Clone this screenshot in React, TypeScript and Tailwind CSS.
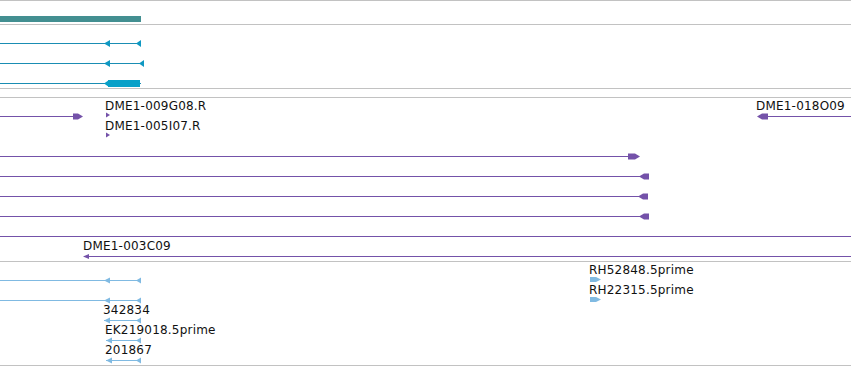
import type { ReactNode } from "react";

type Pt = { x: number; y: number };

const TX_LINE = "#1a8db3";
const TX_HEAD = "#0f98c2";
const TX_CDS = "#08a0c8";
const PURPLE = "#7452a9";
const SKY = "#80bae2";

// row line sits 18px down a 20px row
const C = 18.5;

function poly(pts: Pt[]) {
  return pts.map((p) => `${p.x},${p.y}`).join(" ");
}

function Line({ x1, x2, color }: { x1: number; x2: number; color: string }) {
  return <rect x={x1} y={18} width={x2 - x1} height={1} fill={color} />;
}

// strand arrowhead, tip at x
function HeadL({ x, c = C, w = 6, h = 7, color }: { x: number; c?: number; w?: number; h?: number; color: string }) {
  return (
    <polygon
      points={poly([
        { x, y: c },
        { x: x + w, y: c - h / 2 },
        { x: x + w, y: c + h / 2 },
      ])}
      fill={color}
    />
  );
}

function HeadR({ x, c = C, w = 4, h = 5, color }: { x: number; c?: number; w?: number; h?: number; color: string }) {
  return (
    <polygon
      points={poly([
        { x, y: c },
        { x: x - w, y: c - h / 2 },
        { x: x - w, y: c + h / 2 },
      ])}
      fill={color}
    />
  );
}

function BlockR({ x1, x2, c = C, h = 6, t = 5, color }: { x1: number; x2: number; c?: number; h?: number; t?: number; color: string }) {
  return (
    <polygon
      points={poly([
        { x: x1, y: c - h / 2 },
        { x: x2 - t, y: c - h / 2 },
        { x: x2, y: c },
        { x: x2 - t, y: c + h / 2 },
        { x: x1, y: c + h / 2 },
      ])}
      fill={color}
    />
  );
}

function BlockL({ x1, x2, c = C, h = 6, t = 5, color }: { x1: number; x2: number; c?: number; h?: number; t?: number; color: string }) {
  return (
    <polygon
      points={poly([
        { x: x1, y: c },
        { x: x1 + t, y: c - h / 2 },
        { x: x2, y: c - h / 2 },
        { x: x2, y: c + h / 2 },
        { x: x1 + t, y: c + h / 2 },
      ])}
      fill={color}
    />
  );
}

type RowLabel = { x: number; text: string };

// one 20px feature row: glyphs in an svg, labels placed at their genomic x
function Row({ labels = [], children }: { labels?: RowLabel[]; children?: ReactNode }) {
  return (
    <div className="relative h-[20px]">
      <svg className="absolute inset-0 overflow-visible" width={851} height={20}>
        {children}
      </svg>
      {labels.map((l) => (
        <span
          key={l.text}
          className="absolute top-[1px] whitespace-nowrap text-[12px] leading-[14px] tracking-[0.2px] text-[#111] font-['DejaVu_Sans',sans-serif]"
          style={{ left: l.x }}
        >
          {l.text}
        </span>
      ))}
    </div>
  );
}

function CoverageTrack() {
  return (
    <div className="h-[24px] border-b border-[#c2c2c2] pt-[15px]">
      <div className="w-[141px] h-[6px] bg-[#438f91]" />
    </div>
  );
}

function TranscriptTrack() {
  return (
    <div className="flex flex-col h-[64px] border-b border-[#c2c2c2]">
      <Row>
        <Line x1={0} x2={141} color={TX_LINE} />
        <HeadL x={104} color={TX_HEAD} />
        <HeadL x={136} w={5} color={TX_HEAD} />
      </Row>
      <Row>
        <Line x1={0} x2={144} color={TX_LINE} />
        <HeadL x={104} color={TX_HEAD} />
        <HeadL x={139} w={5} color={TX_HEAD} />
      </Row>
      <Row>
        <Line x1={0} x2={141} color={TX_LINE} />
        <rect x={108} y={15} width={32} height={7} fill={TX_CDS} />
        <HeadL x={104} w={5} color={TX_CDS} />
      </Row>
    </div>
  );
}

function CloneTrack() {
  return (
    <div className="flex flex-col h-[164px] border-b border-[#c2c2c2]">
      <Row
        labels={[
          { x: 105, text: "DME1-009G08.R" },
          { x: 756, text: "DME1-018O09" },
        ]}
      >
        <Line x1={0} x2={76} color={PURPLE} />
        <BlockR x1={73} x2={83} color={PURPLE} />
        <HeadR x={110} c={17} color={PURPLE} />
        <Line x1={760} x2={851} color={PURPLE} />
        <BlockL x1={757} x2={768} color={PURPLE} />
      </Row>
      <Row labels={[{ x: 105, text: "DME1-005I07.R" }]}>
        <HeadR x={110} c={17} color={PURPLE} />
      </Row>
      <Row>
        <Line x1={0} x2={632} color={PURPLE} />
        <BlockR x1={628} x2={640} color={PURPLE} />
      </Row>
      {[649, 648, 649].map((end, i) => (
        <Row key={i}>
          <Line x1={0} x2={end - 5} color={PURPLE} />
          <BlockL x1={end - 10} x2={end} color={PURPLE} />
        </Row>
      ))}
      <Row>
        <Line x1={0} x2={851} color={PURPLE} />
      </Row>
      <Row labels={[{ x: 83, text: "DME1-003C09" }]}>
        <Line x1={86} x2={851} color={PURPLE} />
        <HeadL x={83} w={6} h={5} color={PURPLE} />
      </Row>
    </div>
  );
}

function EstPair({ x1, a }: { x1: number; a: number }) {
  return (
    <>
      <Line x1={x1} x2={141} color={SKY} />
      <HeadL x={a} h={6} color={SKY} />
      <HeadL x={136} w={5} h={6} color={SKY} />
    </>
  );
}

function EstTrack() {
  return (
    <div className="flex flex-col h-[104px] border-b border-[#c2c2c2]">
      <Row labels={[{ x: 589, text: "RH52848.5prime" }]}>
        <EstPair x1={0} a={104} />
        <BlockR x1={590} x2={601} c={17.5} h={5} color={SKY} />
      </Row>
      <Row labels={[{ x: 589, text: "RH22315.5prime" }]}>
        <EstPair x1={0} a={104} />
        <BlockR x1={590} x2={601} c={17.5} h={5} color={SKY} />
      </Row>
      <Row labels={[{ x: 103, text: "342834" }]}>
        <EstPair x1={104} a={104} />
      </Row>
      <Row labels={[{ x: 105, text: "EK219018.5prime" }]}>
        <EstPair x1={106} a={106} />
      </Row>
      <Row labels={[{ x: 105, text: "201867" }]}>
        <EstPair x1={106} a={106} />
      </Row>
    </div>
  );
}

export default function App() {
  return (
    <div className="w-[851px] h-[366px] overflow-hidden bg-white border-t border-[#c2c2c2]">
      <CoverageTrack />
      <TranscriptTrack />
      <div className="h-[9px] border-b border-[#c2c2c2]" />
      <CloneTrack />
      <EstTrack />
    </div>
  );
}
